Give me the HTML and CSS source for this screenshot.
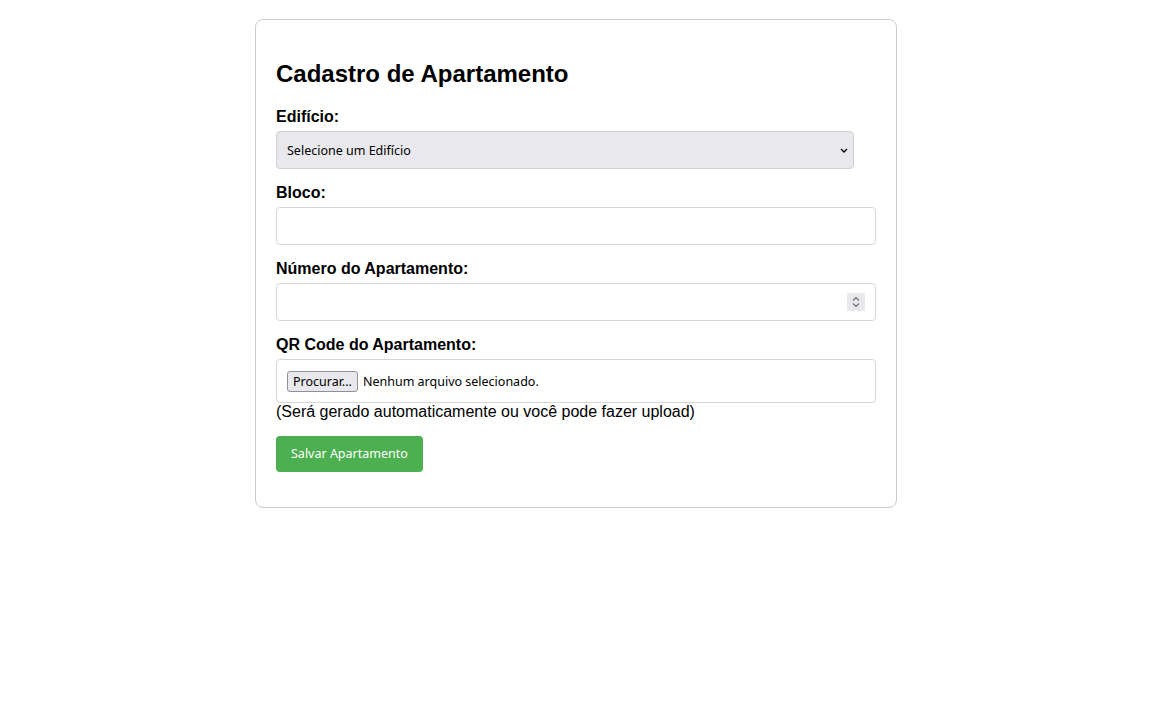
FILE: index.html
```html
<!DOCTYPE html>
<html lang="pt-BR">
<head>
<meta charset="utf-8">
<title>Cadastro de Apartamento</title>
<link rel="stylesheet" href="styles.css">
</head>
<body>
<div class="container">
  <h2 class="title">Cadastro de Apartamento</h2>
  <form class="form">
    <label class="label label-first" for="edificio">Edifício:</label>
    <div class="select-wrap">
      <select id="edificio" class="field select">
        <option>Selecione um Edifício</option>
      </select>
      <svg class="chevron" width="8" height="5" viewBox="0 0 8 5"><path d="M1 1 L4 4 L7 1" fill="none" stroke="#000" stroke-width="1.4"/></svg>
    </div>

    <label class="label" for="bloco">Bloco:</label>
    <input id="bloco" type="text" class="field input">

    <label class="label" for="numero">Número do Apartamento:</label>
    <div class="field input number">
      <span class="spin">
        <svg width="10" height="12" viewBox="0 0 10 12"><path d="M2 4.5 L5 1.5 L8 4.5" fill="none" stroke="#6e6e73" stroke-width="1.2"/><path d="M2 7.5 L5 10.5 L8 7.5" fill="none" stroke="#6e6e73" stroke-width="1.2"/></svg>
      </span>
    </div>

    <label class="label" for="qr">QR Code do Apartamento:</label>
    <label class="field file" for="qr">
      <input id="qr" type="file" class="file-native">
      <span class="file-btn">Procurar...</span>
      <span class="file-text">Nenhum arquivo selecionado.</span>
    </label>
    <span class="hint">(Será gerado automaticamente ou você pode fazer upload)</span>

    <button type="button" class="btn">Salvar Apartamento</button>
  </form>
</div>
</body>
</html>
```

FILE: styles.css
```css
html, body {
  margin: 0;
  padding: 0;
  background: #fff;
}
body {
  font-family: "Liberation Sans", Arial, sans-serif;
  color: #000;
  padding-top: 19px;
}
.container {
  width: 600px;
  margin: 0 auto;
  padding: 20px;
  border: 1px solid #ccc;
  border-radius: 8px;
}
.title {
  font-size: 24px;
  font-weight: bold;
  line-height: 28px;
  margin: 20px 0;
}
.form {
  display: flex;
  flex-direction: column;
  align-items: flex-start;
}
.label {
  display: block;
  font-weight: bold;
  font-size: 16px;
  line-height: 18px;
  padding-top: 1px;
  margin-bottom: 5px;
}
.label-first {
  padding-top: 0;
  margin-bottom: 5px;
}
.field {
  box-sizing: border-box;
  font-family: "Noto Sans", "Open Sans", sans-serif;
  font-size: 12.5px;
  line-height: 15px;
  border: 1px solid #d6d6d6;
  border-radius: 4px;
  margin: 0 0 14px;
}
.select-wrap {
  position: relative;
}
.select {
  -webkit-appearance: none;
  appearance: none;
  display: block;
  width: 578px;
  height: 38px;
  padding: 0 10px;
  background-color: #e9e9ed;
  color: #000;
  border-color: #d0d0d4;
}
.chevron {
  position: absolute;
  right: 6px;
  top: 17px;
  pointer-events: none;
}
.input {
  width: 600px;
  height: 38px;
  padding: 10px;
  background: #fff;
  outline: none;
}
.number {
  display: flex;
  justify-content: flex-end;
  align-items: center;
  padding: 0 10px;
}
.spin {
  width: 18px;
  height: 18px;
  background: #e9e9ed;
  display: flex;
  align-items: center;
  justify-content: center;
}
.file {
  width: 600px;
  height: 44px;
  padding: 10px;
  margin-bottom: 0;
  display: flex;
  align-items: center;
  gap: 5px;
  background: #fff;
  cursor: pointer;
}
.file-native {
  display: none;
}
.file-btn {
  box-sizing: border-box;
  height: 21px;
  padding: 0 5px;
  display: flex;
  align-items: center;
  background: #e9e9ed;
  border: 1px solid #8f8f9d;
  border-radius: 3px;
  color: #000;
}
.file-text {
  color: #000;
}
.hint {
  font-size: 16px;
  line-height: 18px;
  margin-bottom: 15px;
}
.btn {
  font-family: "Noto Sans", "Open Sans", sans-serif;
  font-size: 12.5px;
  line-height: 16px;
  color: #fff;
  background: #4caf50;
  border: none;
  border-radius: 4px;
  padding: 10px 15px;
  margin-bottom: 15px;
  cursor: pointer;
}
```
